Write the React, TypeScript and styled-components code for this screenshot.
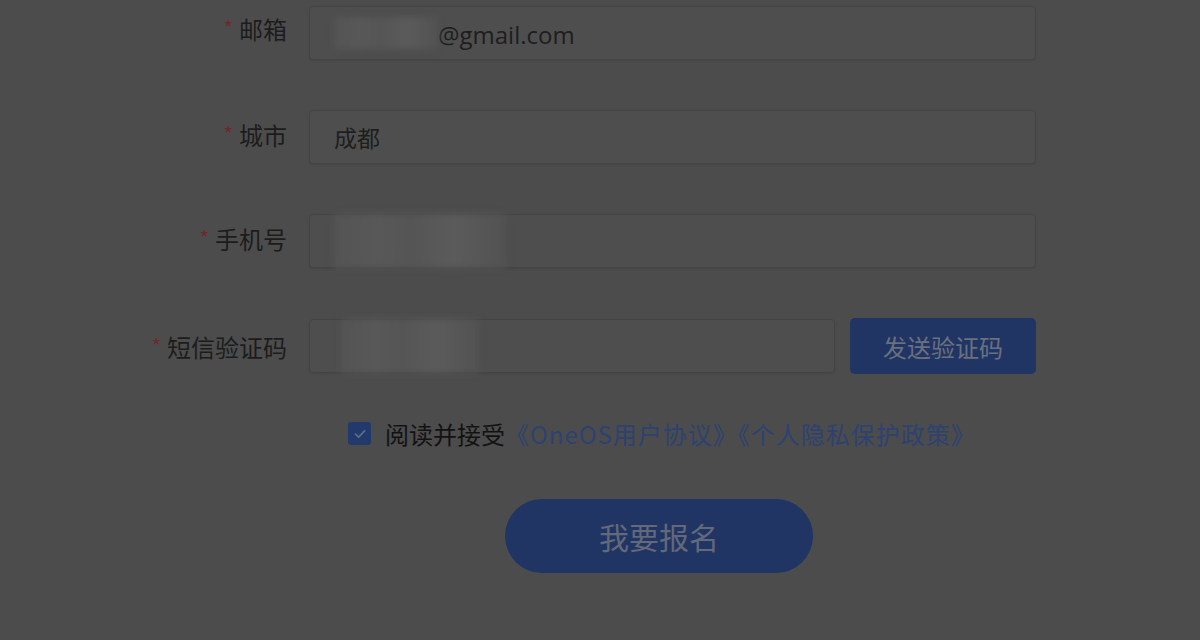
import styled, { createGlobalStyle } from "styled-components";

const GlobalStyle = createGlobalStyle`
  html, body {
    margin: 0;
    padding: 0;
    background-color: #4c4c4c;
  }
  body {
    font-family: "Noto Sans CJK SC", "Noto Sans", sans-serif;
  }
`;

const Page = styled.div`
  width: 1200px;
  height: 640px;
  overflow: hidden;
  background-color: #4c4c4c;
  padding-top: 6px;
  box-sizing: border-box;
`;

const Form = styled.div`
  display: grid;
  grid-template-columns: 147px 727px;
  column-gap: 22px;
  row-gap: 50px;
  margin-left: 140px;
`;

const Label = styled.div<{ $drop?: number }>`
  display: flex;
  justify-content: flex-end;
  align-items: center;
  gap: 6px;
  padding-top: ${(p) => p.$drop ?? 0}px;
  height: 44px;
  font-size: 24px;
  color: #1c1c1c;
  white-space: nowrap;
`;

const Star = styled.span`
  color: #70282c;
  font-size: 20px;
  line-height: 1;
  margin-top: 0;
`;

const Input = styled.div`
  height: 54px;
  box-sizing: border-box;
  border: 1px solid #444444;
  border-radius: 4px;
  background-color: #4e4e4e;
  box-shadow: 0 1px 2px rgba(0, 0, 0, 0.08);
  display: flex;
  align-items: center;
  padding-left: 24px;
  font-size: 23px;
  color: #1e1e1e;
`;

const Value = styled.span`
  font-family: "Open Sans", "Noto Sans CJK SC", sans-serif;
  font-size: 24px;
  padding-top: 2px;
`;

const Blur = styled.span<{ $w: number; $h: number }>`
  display: inline-block;
  width: ${(p) => p.$w}px;
  height: ${(p) => p.$h}px;
  background: linear-gradient(
    90deg,
    #545454 0%,
    #585858 25%,
    #555555 45%,
    #5b5b5b 70%,
    #525252 100%
  );
  filter: blur(3px);
`;

const SmsRow = styled.div`
  display: flex;
  gap: 15px;
  margin-top: 1px;
`;

const SmsInput = styled(Input)`
  width: 526px;
  padding-left: 31px;
`;

const SendButton = styled.button`
  width: 186px;
  height: 56px;
  margin-top: -1px;
  border: none;
  border-radius: 5px;
  background-color: #203563;
  color: #6b7080;
  font-family: "Noto Sans CJK SC", sans-serif;
  font-size: 24px;
  cursor: pointer;
`;

const Agree = styled.div`
  grid-column: 2;
  display: flex;
  align-items: center;
  gap: 14px;
  margin-top: -8px;
  padding-left: 39px;
  font-size: 24px;
  color: #121212;
`;

const Check = styled.span`
  width: 23px;
  height: 23px;
  border-radius: 3px;
  background-color: #223a6b;
  display: flex;
  align-items: center;
  justify-content: center;
`;

const Link = styled.span`
  color: #2c4272;
  letter-spacing: 1px;
`;

const SubmitRow = styled.div`
  grid-column: 2;
  margin-top: -2px;
  padding-left: 196px;
`;

const Submit = styled.button`
  width: 308px;
  height: 74px;
  border: none;
  border-radius: 37px;
  background-color: #203563;
  color: #63687a;
  font-family: "Noto Sans CJK SC", sans-serif;
  font-size: 30px;
  cursor: pointer;
`;

function App() {
  return (
    <Page>
      <GlobalStyle />
      <Form>
        <Label>
          <Star>*</Star>邮箱
        </Label>
        <Input>
          <Blur $w={104} $h={32} />
          <Value>@gmail.com</Value>
        </Input>

        <Label $drop={2}>
          <Star>*</Star>城市
        </Label>
        <Input>成都</Input>

        <Label $drop={2}>
          <Star>*</Star>手机号
        </Label>
        <Input>
          <Blur $w={172} $h={54} />
        </Input>

        <Label $drop={6}>
          <Star>*</Star>短信验证码
        </Label>
        <SmsRow>
          <SmsInput>
            <Blur $w={138} $h={54} />
          </SmsInput>
          <SendButton>发送验证码</SendButton>
        </SmsRow>

        <Agree>
          <Check>
            <svg width="14" height="14" viewBox="0 0 14 14">
              <path
                d="M2.5 7.2 L5.6 10.2 L11.6 3.8"
                fill="none"
                stroke="#5b6b8c"
                strokeWidth="1.8"
                strokeLinecap="round"
                strokeLinejoin="round"
              />
            </svg>
          </Check>
          <span>
            阅读并接受<Link>《OneOS用户协议》《个人隐私保护政策》</Link>
          </span>
        </Agree>

        <SubmitRow>
          <Submit>我要报名</Submit>
        </SubmitRow>
      </Form>
    </Page>
  );
}

export default App;
